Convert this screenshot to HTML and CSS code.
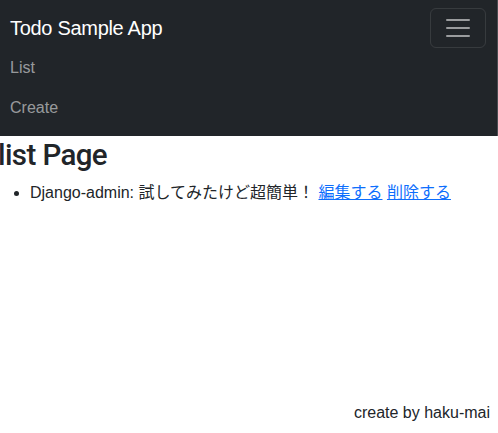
FILE: index.html
```html
<!DOCTYPE html>
<html lang="ja">
<head>
<meta charset="utf-8">
<title>Todo Sample App</title>
<link rel="stylesheet" href="styles.css">
</head>
<body>
<nav class="navbar">
  <div class="nav-container">
    <div class="nav-top">
      <a class="brand" href="#">Todo Sample App</a>
      <button class="toggler" type="button" aria-label="Toggle navigation">
        <svg class="toggler-icon" viewBox="0 0 30 30" width="30" height="30" aria-hidden="true">
          <path d="M4 7h22M4 15h22M4 23h22" stroke="rgba(255,255,255,0.55)" stroke-width="2" stroke-linecap="round" stroke-miterlimit="10" fill="none"/>
        </svg>
      </button>
    </div>
    <ul class="nav-links">
      <li><a class="nav-link" href="#">List</a></li>
      <li><a class="nav-link" href="#">Create</a></li>
    </ul>
  </div>
</nav>
<main class="content">
  <h1 class="page-title">list Page</h1>
  <ul class="todo-list">
    <li>Django-admin: 試してみたけど超簡単！ <a href="#">編集する</a> <a href="#">削除する</a></li>
  </ul>
</main>
<footer class="footer">create by haku-mai</footer>
</body>
</html>
```
FILE: styles.css
```css
* { box-sizing: border-box; }
html, body { height: 100%; }
html { overflow: hidden; }
body {
  margin: 0 0 0 -2px;
  width: 500px;
  min-height: 100%;
  display: flex;
  flex-direction: column;
  font-family: "Liberation Sans", Arial, "Noto Sans CJK JP", sans-serif;
  font-size: 16px;
  line-height: 1.5;
  color: #212529;
  background: #fff;
}
.navbar {
  background: #212529;
  padding: 8px 0;
  box-shadow: inset -3px 0 0 -2px #4a4d51;
}
.nav-container {
  padding: 0 12px;
}
.nav-top {
  display: flex;
  justify-content: space-between;
  align-items: center;
}
.brand {
  color: #fff;
  text-decoration: none;
  font-size: 20px;
  line-height: 30px;
  padding: 5px 0;
  letter-spacing: -0.3px;
}
.toggler {
  display: flex;
  align-items: center;
  justify-content: center;
  padding: 4px 12px;
  background: transparent;
  border: 1px solid rgba(255,255,255,0.1);
  border-radius: 6px;
  height: 40px;
  width: 56px;
}
.toggler-icon { display: block; }
.nav-links {
  list-style: none;
  margin: 0;
  padding: 0;
}
.nav-link {
  display: block;
  padding: 8px 0;
  line-height: 24px;
  color: rgba(255,255,255,0.55);
  text-decoration: none;
}
.content { flex: 1; }
.page-title {
  margin: 0 0 8px;
  padding-top: 2px;
  font-family: Roboto, "Liberation Sans", sans-serif;
  font-size: 29.5px;
  font-weight: 500;
  line-height: 1.2;
  letter-spacing: -0.6px;
}
.todo-list {
  margin: 0 0 16px;
  padding-left: 32px;
}
.todo-list a { color: #0d6efd; }
.footer {
  text-align: right;
  padding: 8px;
  line-height: 24px;
}
```
